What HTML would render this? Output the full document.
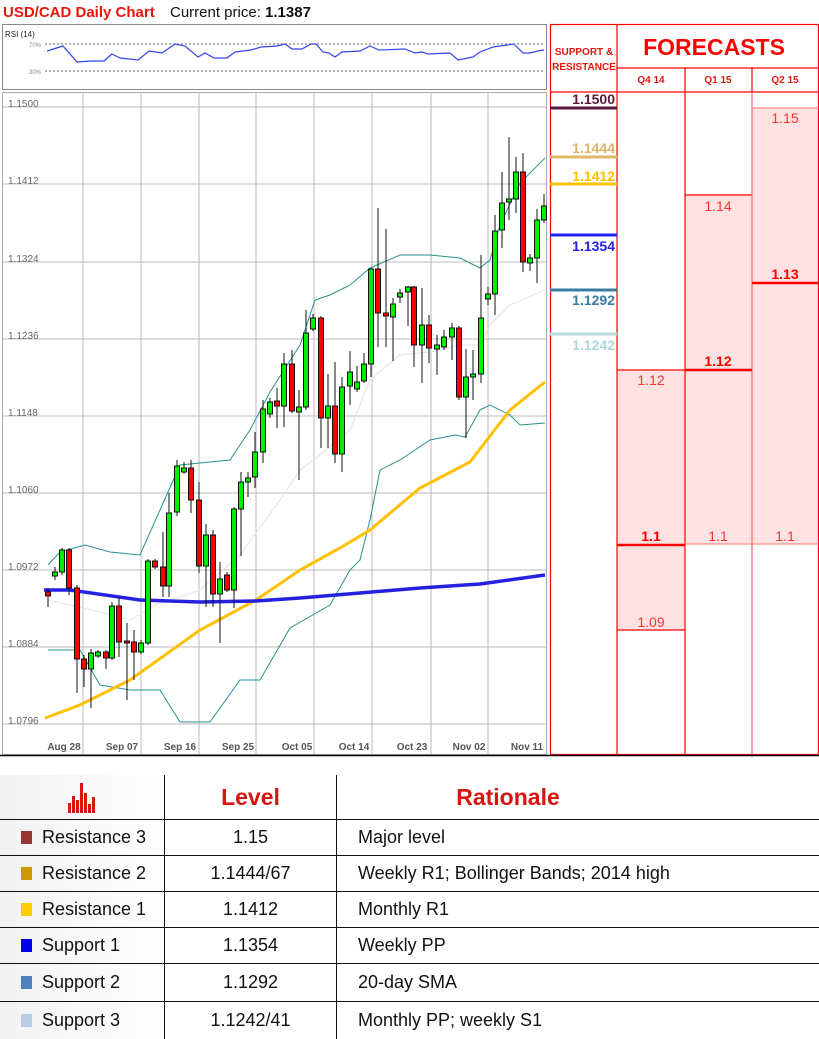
<!DOCTYPE html>
<html><head><meta charset="utf-8"><style>
body{margin:0;width:819px;height:1037px;background:#fff;overflow:hidden;font-family:"Liberation Sans",sans-serif}
.t{position:absolute;left:0;top:775px;width:819px;border-collapse:collapse;font-family:"Liberation Sans Narrow","Liberation Sans",sans-serif;font-size:18px;color:#111}
.t td{border-bottom:1.5px solid #111;padding:0;height:35px}
.t td.c1{width:164px;border-right:1.5px solid #111;background:linear-gradient(90deg,#f2f2f2,#fafafa 60%,#fff)}
.t td.c2{width:171px;border-right:1.5px solid #111;text-align:center}
.t td.c3{padding-left:21px}
.sq{display:inline-block;width:11px;height:13px;margin:0 10px 0 21px;vertical-align:-1px}
.h{color:#d9130f;font-weight:bold;font-size:23px;text-align:center;font-family:"Liberation Sans Narrow","Liberation Sans",sans-serif}
</style></head><body>
<svg width="819" height="775" style="position:absolute;left:0;top:0" font-family="Liberation Sans, sans-serif">
<text x="3" y="17" fill="#e8150f" font-weight="bold" font-size="15">USD/CAD Daily Chart</text>
<text x="170" y="17" fill="#111" font-size="15">Current price: <tspan font-weight="bold">1.1387</tspan></text>
<rect x="2.5" y="24.5" width="544" height="65" fill="#fff" stroke="#888"/>
<text x="5" y="37" font-size="8" fill="#222">RSI (14)</text>
<text x="29" y="47" font-size="6" fill="#888">70%</text><text x="29" y="74" font-size="6" fill="#888">30%</text>
<line x1="45" y1="44" x2="545" y2="44" stroke="#666" stroke-dasharray="2,2"/>
<line x1="45" y1="71" x2="545" y2="71" stroke="#666" stroke-dasharray="2,2"/>
<polyline fill="none" stroke="#3344ee" stroke-width="1.2" points="47,51 63,46 77,62 91,61 104,61 112,54 120,58 138,60 149,51 162,53 175,44 185,46 198,57 205,53 214,58 227,58 235,52 251,50 261,47 277,46 285,44 292,49 302,49 311,44 316,44 323,52 329,53 335,57 342,52 360,51 370,46 379,50 405,49 415,53 422,52 428,54 450,53 458,60 473,57 480,52 493,47 514,44 523,53 530,53 538,51 544,50"/>
<!-- main chart -->
<rect x="2.5" y="92.5" width="544" height="662" fill="#fff" stroke="#aaa"/>
<g stroke="#bbb" stroke-width="1">
<line x1="3" y1="107" x2="546" y2="107"/><line x1="3" y1="184" x2="546" y2="184"/><line x1="3" y1="262" x2="546" y2="262"/><line x1="3" y1="339" x2="546" y2="339"/><line x1="3" y1="416" x2="546" y2="416"/><line x1="3" y1="493" x2="546" y2="493"/><line x1="3" y1="570" x2="546" y2="570"/><line x1="3" y1="647" x2="546" y2="647"/><line x1="3" y1="724" x2="546" y2="724"/>
<line x1="83" y1="93" x2="83" y2="754"/><line x1="141" y1="93" x2="141" y2="754"/><line x1="199" y1="93" x2="199" y2="754"/><line x1="256" y1="93" x2="256" y2="754"/><line x1="314" y1="93" x2="314" y2="754"/><line x1="372" y1="93" x2="372" y2="754"/><line x1="431" y1="93" x2="431" y2="754"/><line x1="488" y1="93" x2="488" y2="754"/>
</g>
<g font-size="10" fill="#666"><text x="8" y="107">1.1500</text><text x="8" y="184">1.1412</text><text x="8" y="262">1.1324</text><text x="8" y="339">1.1236</text><text x="8" y="416">1.1148</text><text x="8" y="493">1.1060</text><text x="8" y="570">1.0972</text><text x="8" y="647">1.0884</text><text x="8" y="724">1.0796</text></g>
<g font-size="10" fill="#555" font-weight="bold" text-anchor="middle"><text x="64" y="750">Aug 28</text><text x="122" y="750">Sep 07</text><text x="180" y="750">Sep 16</text><text x="238" y="750">Sep 25</text><text x="297" y="750">Oct 05</text><text x="354" y="750">Oct 14</text><text x="412" y="750">Oct 23</text><text x="469" y="750">Nov 02</text><text x="527" y="750">Nov 11</text></g>
<polyline fill="none" stroke="#e6e6e6" stroke-width="1.2" points="48,600 100,612 130,620 155,605 200,590 240,555 280,500 300,470 320,455 350,430 370,380 400,355 430,352 460,345 480,345 490,325 510,305 545,290"/>
<polyline fill="none" stroke="#2a9090" stroke-width="1" points="48,565 60,552 85,545 110,552 140,555 180,465 230,460 250,430 270,392 300,345 315,300 330,295 350,285 370,268 400,255 430,255 460,258 480,268 490,260 500,225 520,183 545,158"/>
<polyline fill="none" stroke="#2a9090" stroke-width="1" points="48,650 80,650 100,685 130,690 160,690 180,722 210,722 240,680 260,680 290,628 330,605 350,570 360,560 370,520 380,470 400,460 430,440 455,435 465,437 480,410 490,405 510,415 520,425 545,423"/>
<polyline fill="none" stroke="#ffc000" stroke-width="3" points="45,718 80,705 130,680 200,630 256,600 300,570 340,548 370,530 420,488 470,462 510,410 545,382"/>
<polyline fill="none" stroke="#2222e0" stroke-width="3.5" points="44,590 70,590 140,600 200,602 256,601 300,598 360,593 420,588 480,584 545,575"/>
<g stroke="#000" stroke-width="1" id="c"></g>
</svg>
<svg width="819" height="775" style="position:absolute;left:0;top:0" font-family="Liberation Sans, sans-serif">
<g stroke="#000" stroke-width="1">
<script></script>
</g>
<!-- candles: x, wickTop, wickBot, bodyTop, bodyBot, color -->
<g stroke="#111" stroke-width="1">
<line x1="48" y1="588" x2="48" y2="607"/><rect x="45.5" y="592" width="5" height="4" fill="#f00"/>
<line x1="55" y1="567" x2="55" y2="580"/><rect x="52.5" y="572" width="5" height="4" fill="#0e0"/>
<line x1="62" y1="548" x2="62" y2="575"/><rect x="59.5" y="550" width="5" height="22" fill="#0e0"/>
<line x1="69" y1="548" x2="69" y2="595"/><rect x="66.5" y="550" width="5" height="38" fill="#f00"/>
<line x1="77" y1="585" x2="77" y2="693"/><rect x="74.5" y="588" width="5" height="71" fill="#f00"/>
<line x1="84" y1="655" x2="84" y2="687"/><rect x="81.5" y="659" width="5" height="10" fill="#f00"/>
<line x1="91" y1="649" x2="91" y2="708"/><rect x="88.5" y="653" width="5" height="16" fill="#0e0"/>
<line x1="98" y1="650" x2="98" y2="658"/><rect x="95.5" y="652" width="5" height="4" fill="#0e0"/>
<line x1="106" y1="650" x2="106" y2="669"/><rect x="103.5" y="652" width="5" height="6" fill="#f00"/>
<line x1="112" y1="602" x2="112" y2="660"/><rect x="109.5" y="606" width="5" height="52" fill="#0e0"/>
<line x1="119" y1="597" x2="119" y2="657"/><rect x="116.5" y="606" width="5" height="36" fill="#f00"/>
<line x1="127" y1="623" x2="127" y2="700"/><rect x="124.5" y="641" width="5" height="2" fill="#f00"/>
<line x1="134" y1="630" x2="134" y2="680"/><rect x="131.5" y="642" width="5" height="10" fill="#f00"/>
<line x1="141" y1="640" x2="141" y2="654"/><rect x="138.5" y="643" width="5" height="9" fill="#0e0"/>
<line x1="148" y1="559" x2="148" y2="645"/><rect x="145.5" y="561" width="5" height="82" fill="#0e0"/>
<line x1="155" y1="559" x2="155" y2="569"/><rect x="152.5" y="561" width="5" height="6" fill="#f00"/>
<line x1="163" y1="532" x2="163" y2="597"/><rect x="160.5" y="567" width="5" height="19" fill="#f00"/>
<line x1="169" y1="493" x2="169" y2="597"/><rect x="166.5" y="513" width="5" height="73" fill="#0e0"/>
<line x1="177" y1="460" x2="177" y2="516"/><rect x="174.5" y="466" width="5" height="46" fill="#0e0"/>
<line x1="184" y1="462" x2="184" y2="474"/><rect x="181.5" y="468" width="5" height="4" fill="#0e0"/>
<line x1="191" y1="460" x2="191" y2="513"/><rect x="188.5" y="468" width="5" height="32" fill="#f00"/>
<line x1="199" y1="482" x2="199" y2="573"/><rect x="196.5" y="500" width="5" height="66" fill="#f00"/>
<line x1="206" y1="524" x2="206" y2="607"/><rect x="203.5" y="535" width="5" height="31" fill="#0e0"/>
<line x1="213" y1="530" x2="213" y2="607"/><rect x="210.5" y="535" width="5" height="59" fill="#f00"/>
<line x1="220" y1="562" x2="220" y2="643"/><rect x="217.5" y="579" width="5" height="15" fill="#0e0"/>
<line x1="227" y1="572" x2="227" y2="592"/><rect x="224.5" y="575" width="5" height="15" fill="#f00"/>
<line x1="234" y1="507" x2="234" y2="608"/><rect x="231.5" y="509" width="5" height="81" fill="#0e0"/>
<line x1="241" y1="472" x2="241" y2="556"/><rect x="238.5" y="482" width="5" height="27" fill="#0e0"/>
<line x1="248" y1="472" x2="248" y2="497"/><rect x="245.5" y="478" width="5" height="4" fill="#0e0"/>
<line x1="255" y1="432" x2="255" y2="488"/><rect x="252.5" y="452" width="5" height="25" fill="#0e0"/>
<line x1="263" y1="400" x2="263" y2="463"/><rect x="260.5" y="409" width="5" height="43" fill="#0e0"/>
<line x1="270" y1="398" x2="270" y2="418"/><rect x="267.5" y="402" width="5" height="12" fill="#0e0"/>
<line x1="277" y1="388" x2="277" y2="428"/><rect x="274.5" y="401" width="5" height="5" fill="#f00"/>
<line x1="284" y1="353" x2="284" y2="427"/><rect x="281.5" y="364" width="5" height="42" fill="#0e0"/>
<line x1="292" y1="350" x2="292" y2="413"/><rect x="289.5" y="364" width="5" height="47" fill="#f00"/>
<line x1="299" y1="390" x2="299" y2="480"/><rect x="296.5" y="407" width="5" height="5" fill="#0e0"/>
<line x1="306" y1="310" x2="306" y2="410"/><rect x="303.5" y="333" width="5" height="74" fill="#0e0"/>
<line x1="313" y1="314" x2="313" y2="331"/><rect x="310.5" y="318" width="5" height="11" fill="#0e0"/>
<line x1="321" y1="316" x2="321" y2="448"/><rect x="318.5" y="318" width="5" height="100" fill="#f00"/>
<line x1="328" y1="374" x2="328" y2="448"/><rect x="325.5" y="406" width="5" height="12" fill="#0e0"/>
<line x1="335" y1="362" x2="335" y2="463"/><rect x="332.5" y="406" width="5" height="48" fill="#f00"/>
<line x1="342" y1="377" x2="342" y2="472"/><rect x="339.5" y="387" width="5" height="67" fill="#0e0"/>
<line x1="350" y1="351" x2="350" y2="405"/><rect x="347.5" y="372" width="5" height="14" fill="#0e0"/>
<line x1="357" y1="366" x2="357" y2="392"/><rect x="354.5" y="382" width="5" height="7" fill="#0e0"/>
<line x1="364" y1="353" x2="364" y2="383"/><rect x="361.5" y="364" width="5" height="17" fill="#0e0"/>
<line x1="371" y1="268" x2="371" y2="377"/><rect x="368.5" y="269" width="5" height="95" fill="#0e0"/>
<line x1="378" y1="208" x2="378" y2="347"/><rect x="375.5" y="269" width="5" height="44" fill="#f00"/>
<line x1="386" y1="229" x2="386" y2="347"/><rect x="383.5" y="313" width="5" height="3" fill="#f00"/>
<line x1="393" y1="298" x2="393" y2="361"/><rect x="390.5" y="304" width="5" height="13" fill="#0e0"/>
<line x1="400" y1="289" x2="400" y2="303"/><rect x="397.5" y="293" width="5" height="4" fill="#0e0"/>
<line x1="408" y1="286" x2="408" y2="326"/><rect x="405.5" y="287" width="5" height="5" fill="#0e0"/>
<line x1="414" y1="286" x2="414" y2="367"/><rect x="411.5" y="287" width="5" height="58" fill="#f00"/>
<line x1="422" y1="288" x2="422" y2="383"/><rect x="419.5" y="325" width="5" height="20" fill="#0e0"/>
<line x1="429" y1="315" x2="429" y2="363"/><rect x="426.5" y="325" width="5" height="23" fill="#f00"/>
<line x1="437" y1="335" x2="437" y2="375"/><rect x="434.5" y="345" width="5" height="4" fill="#0e0"/>
<line x1="444" y1="330" x2="444" y2="350"/><rect x="441.5" y="337" width="5" height="10" fill="#0e0"/>
<line x1="452" y1="323" x2="452" y2="360"/><rect x="449.5" y="328" width="5" height="9" fill="#0e0"/>
<line x1="459" y1="326" x2="459" y2="400"/><rect x="456.5" y="328" width="5" height="69" fill="#f00"/>
<line x1="466" y1="349" x2="466" y2="438"/><rect x="463.5" y="377" width="5" height="20" fill="#0e0"/>
<line x1="473" y1="350" x2="473" y2="400"/><rect x="470.5" y="374" width="5" height="3" fill="#0e0"/>
<line x1="481" y1="255" x2="481" y2="383"/><rect x="478.5" y="318" width="5" height="56" fill="#0e0"/>
<line x1="488" y1="287" x2="488" y2="305"/><rect x="485.5" y="294" width="5" height="5" fill="#0e0"/>
<line x1="495" y1="215" x2="495" y2="315"/><rect x="492.5" y="231" width="5" height="63" fill="#0e0"/>
<line x1="502" y1="172" x2="502" y2="248"/><rect x="499.5" y="203" width="5" height="27" fill="#0e0"/>
<line x1="509" y1="137" x2="509" y2="220"/><rect x="506.5" y="199" width="5" height="3" fill="#0e0"/>
<line x1="516" y1="157" x2="516" y2="213"/><rect x="513.5" y="172" width="5" height="27" fill="#0e0"/>
<line x1="523" y1="153" x2="523" y2="272"/><rect x="520.5" y="172" width="5" height="90" fill="#f00"/>
<line x1="530" y1="254" x2="530" y2="271"/><rect x="527.5" y="258" width="5" height="5" fill="#0e0"/>
<line x1="537" y1="209" x2="537" y2="283"/><rect x="534.5" y="220" width="5" height="38" fill="#0e0"/>
<line x1="544" y1="194" x2="544" y2="223"/><rect x="541.5" y="206" width="5" height="14" fill="#0e0"/>
</g>
<!-- right panel -->
<rect x="752" y="108" width="67" height="436" fill="#ffe3e3"/>
<rect x="685" y="195" width="67" height="349" fill="#ffe3e3"/>
<rect x="617" y="370" width="68" height="260" fill="#ffe3e3"/>
<g stroke="#f00" stroke-width="1.2" fill="none">
<rect x="550.5" y="24.5" width="268" height="730"/>
<line x1="617" y1="24" x2="617" y2="755"/><line x1="685" y1="68" x2="685" y2="755"/><line x1="752" y1="68" x2="752" y2="755"/>
<line x1="617" y1="68" x2="819" y2="68"/><line x1="550" y1="92" x2="819" y2="92"/>
<line x1="617" y1="370" x2="685" y2="370"/><line x1="617" y1="630" x2="685" y2="630"/>
<line x1="685" y1="195" x2="752" y2="195"/>
</g>
<g stroke="#f77" stroke-width="1"><line x1="752" y1="108" x2="819" y2="108"/><line x1="685" y1="544" x2="819" y2="544"/><line x1="752" y1="92" x2="752" y2="755"/></g>
<g stroke="#f00" stroke-width="2.5"><line x1="617" y1="545" x2="685" y2="545"/><line x1="685" y1="370" x2="752" y2="370"/><line x1="752" y1="283" x2="819" y2="283"/></g>
<g font-size="10" fill="#e8150f" font-weight="bold" text-anchor="middle"><text x="584" y="55">SUPPORT &amp;</text><text x="584" y="70">RESISTANCE</text>
<text x="651" y="83">Q4 14</text><text x="718" y="83">Q1 15</text><text x="785" y="83">Q2 15</text></g>
<text x="714" y="55" font-size="23" fill="#f00" font-weight="bold" text-anchor="middle" font-family="Liberation Sans Narrow, Liberation Sans, sans-serif">FORECASTS</text>
<g font-size="14" fill="#f33" text-anchor="middle"><text x="785" y="123">1.15</text><text x="718" y="211">1.14</text><text x="651" y="385">1.12</text><text x="718" y="541">1.1</text><text x="785" y="541">1.1</text><text x="651" y="627">1.09</text></g>
<g font-size="14" fill="#f00" text-anchor="middle" font-weight="bold"><text x="785" y="279">1.13</text><text x="718" y="366">1.12</text><text x="651" y="541">1.1</text></g>
<g font-size="14" font-weight="bold" text-anchor="end">
<text x="615" y="104" fill="#5a1a3a">1.1500</text><text x="615" y="153" fill="#d9b46a">1.1444</text><text x="615" y="181" fill="#ffc000">1.1412</text><text x="615" y="251" fill="#2222dd">1.1354</text><text x="615" y="305" fill="#3a7ca0">1.1292</text><text x="615" y="350" fill="#b0d8d8">1.1242</text></g>
<g stroke-width="3"><line x1="550" y1="108" x2="617" y2="108" stroke="#5a1a3a"/><line x1="550" y1="157" x2="617" y2="157" stroke="#dcb96a"/><line x1="550" y1="184" x2="617" y2="184" stroke="#ffc000"/><line x1="550" y1="235" x2="617" y2="235" stroke="#2222ee"/><line x1="550" y1="290" x2="617" y2="290" stroke="#3a7ca0"/><line x1="550" y1="334" x2="617" y2="334" stroke="#b8dcdc"/></g>
<line x1="0" y1="755.5" x2="819" y2="755.5" stroke="#000" stroke-width="1.5"/>
</svg>
<table class="t">
<tr><td class="c1" style="height:44px;text-align:center;border-bottom:1.5px solid #111"><svg width="32" height="32" viewBox="0 0 32 32" style="vertical-align:middle"><g fill="#d01a10"><rect x="2" y="22" width="3" height="10"/><rect x="6" y="15" width="3" height="17"/><rect x="10" y="19" width="3" height="13"/><rect x="14" y="2" width="3" height="30"/><rect x="18" y="12" width="3" height="20"/><rect x="22" y="23" width="3" height="9"/><rect x="26" y="16" width="3" height="16"/></g></svg></td><td class="c2 h">Level</td><td class="h" style="border-bottom:1.5px solid #111;padding-right:140px">Rationale</td></tr>
<tr><td class="c1"><span class="sq" style="background:#953735"></span>Resistance 3</td><td class="c2">1.15</td><td class="c3">Major level</td></tr>
<tr><td class="c1"><span class="sq" style="background:#cc9900"></span>Resistance 2</td><td class="c2">1.1444/67</td><td class="c3">Weekly R1; Bollinger Bands; 2014 high</td></tr>
<tr><td class="c1"><span class="sq" style="background:#ffcc00"></span>Resistance 1</td><td class="c2">1.1412</td><td class="c3">Monthly R1</td></tr>
<tr><td class="c1"><span class="sq" style="background:#0000ee"></span>Support 1</td><td class="c2">1.1354</td><td class="c3">Weekly PP</td></tr>
<tr><td class="c1" style="height:37px"><span class="sq" style="background:#4f81bd"></span>Support 2</td><td class="c2">1.1292</td><td class="c3">20-day SMA</td></tr>
<tr><td class="c1" style="border-bottom:none;height:37px"><span class="sq" style="background:#b9cde5"></span>Support 3</td><td class="c2" style="border-bottom:none">1.1242/41</td><td class="c3" style="border-bottom:none">Monthly PP; weekly S1</td></tr>
</table>
</body></html>
